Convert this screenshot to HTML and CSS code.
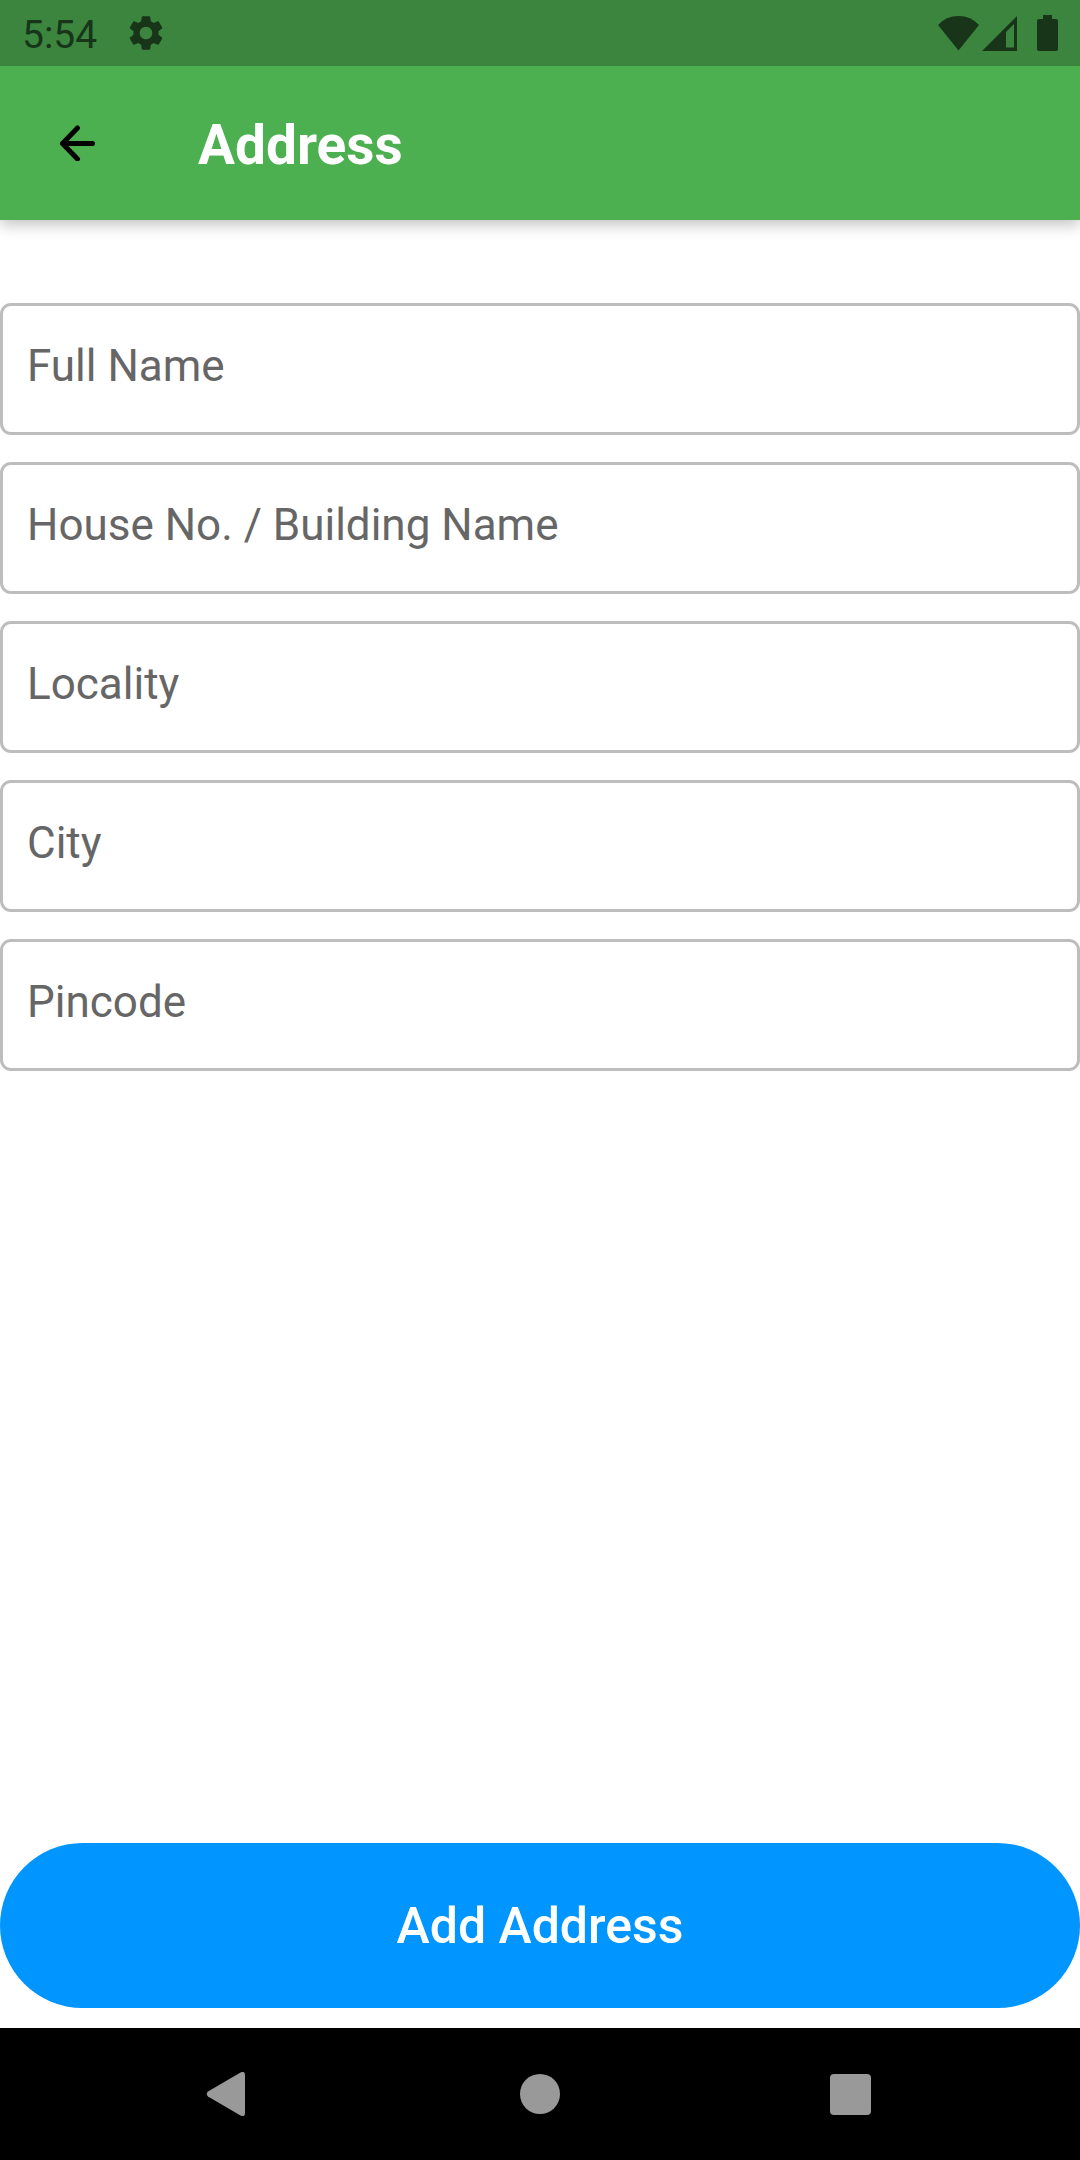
FILE: index.html
```html
<!DOCTYPE html>
<html lang="en">
<head>
<meta charset="utf-8">
<meta name="viewport" content="width=device-width, initial-scale=1">
<title>Address</title>
<link rel="stylesheet" href="styles.css">
</head>
<body>
<div class="screen">
  <div class="status-bar">
    <time class="clock">5:54</time>
    <svg class="gear" viewBox="0 0 24 24" aria-hidden="true"><path d="M19.14 12.94c.04-.3.06-.61.06-.94 0-.32-.02-.64-.07-.94l2.03-1.58c.18-.14.23-.41.12-.61l-1.92-3.32c-.12-.22-.37-.29-.59-.22l-2.39.96c-.5-.38-1.03-.7-1.62-.94l-.36-2.54c-.04-.24-.24-.41-.48-.41h-3.84c-.24 0-.43.17-.47.41l-.36 2.54c-.59.24-1.13.57-1.62.94l-2.39-.96c-.22-.08-.47 0-.59.22L2.74 8.87c-.12.21-.08.47.12.61l2.03 1.58c-.05.3-.09.63-.09.94s.02.64.07.94l-2.03 1.58c-.18.14-.23.41-.12.61l1.92 3.32c.12.22.37.29.59.22l2.39-.96c.5.38 1.03.7 1.62.94l.36 2.54c.05.24.24.41.48.41h3.84c.24 0 .44-.17.47-.41l.36-2.54c.59-.24 1.13-.56 1.62-.94l2.39.96c.22.08.47 0 .59-.22l1.92-3.32c.12-.22.07-.47-.12-.61l-2.01-1.58zM12 15.6c-1.98 0-3.6-1.62-3.6-3.6s1.62-3.6 3.6-3.6 3.6 1.62 3.6 3.6-1.62 3.6-3.6 3.6z"/></svg>
    <div class="indicators">
      <svg class="wifi" viewBox="0 0 41 36" aria-hidden="true"><path d="M0 10Q8 1 20.500 1T41 10L20.500 35.500Z"/></svg>
      <svg class="signal" viewBox="0 0 35 36" aria-hidden="true"><path fill-rule="evenodd" d="M35 1V36H0ZM24 17V32.500H32V9Z"/></svg>
      <svg class="battery" viewBox="0 0 21 36" aria-hidden="true"><path d="M6 0H15V4H19Q21 4 21 6V34Q21 36 19 36H2Q0 36 0 34V6Q0 4 2 4H6Z"/></svg>
    </div>
  </div>

  <header class="app-bar">
    <button class="back" type="button" aria-label="Back">
      <svg viewBox="0 0 36 36" aria-hidden="true"><path d="M33.500 18.500H3.500M18.500 3L3.500 18.500L18.500 34"/></svg>
    </button>
    <h1 class="title">Address</h1>
  </header>

  <form class="address-form">
    <div class="fields">
      <input class="field" type="text" placeholder="Full Name" aria-label="Full Name">
      <input class="field" type="text" placeholder="House No. / Building Name" aria-label="House No. / Building Name">
      <input class="field" type="text" placeholder="Locality" aria-label="Locality">
      <input class="field" type="text" placeholder="City" aria-label="City">
      <input class="field" type="text" placeholder="Pincode" aria-label="Pincode">
    </div>
    <button class="submit" type="submit">Add Address</button>
  </form>

  <nav class="system-nav">
    <button type="button" aria-label="Back"><svg viewBox="0 0 44 44" aria-hidden="true"><path d="M34.500 .5Q39 -1.500 39 3V41Q39 45.500 34.500 43.500L2 24.500Q-.5 22 2 19.500Z"/></svg></button>
    <button type="button" aria-label="Home"><svg viewBox="0 0 44 44" aria-hidden="true"><circle cx="22" cy="22" r="20"/></svg></button>
    <button type="button" aria-label="Recent apps"><svg viewBox="0 0 44 44" aria-hidden="true"><rect y="2" width="41" height="41" rx="4"/></svg></button>
  </nav>
</div>
</body>
</html>
```

FILE: styles.css
```css
* {
  box-sizing: border-box;
}

body {
  margin: 0;
  background: #fff;
  font-family: Roboto, "Liberation Sans", sans-serif;
}

button {
  display: flex;
  align-items: center;
  justify-content: center;
  padding: 0;
  border: 0;
  background: none;
  font-family: inherit;
}

svg {
  display: block;
}

.screen {
  display: flex;
  flex-direction: column;
  min-height: 100vh;
}

.status-bar {
  position: relative;
  z-index: 1;
  display: flex;
  align-items: center;
  height: 66px;
  padding: 0 22px;
  background: #3b853e;
  color: #18351a;
  fill: currentColor;
}

.clock {
  padding-top: 4px;
  font-size: 39px;
  line-height: 46px;
}

.gear {
  width: 42px;
  height: 42px;
  margin-left: 28px;
}

.indicators {
  display: flex;
  align-items: center;
  margin-left: auto;
}

.wifi {
  width: 41px;
  height: 36px;
}

.signal {
  width: 35px;
  height: 36px;
  margin: 0 20px 0 3px;
}

.battery {
  width: 21px;
  height: 36px;
}

.app-bar {
  display: flex;
  align-items: center;
  gap: 44px;
  height: 154px;
  padding: 0 44px 0 0;
  background: #4caf50;
  box-shadow: 0 5px 14px rgba(0, 0, 0, 0.24);
}

.back {
  width: 154px;
  height: 154px;
}

.back svg {
  width: 36px;
  height: 36px;
  fill: none;
  stroke: #000;
  stroke-width: 5;
  stroke-linecap: round;
  stroke-linejoin: round;
}

.title {
  margin: 0;
  padding-top: 4px;
  color: #fff;
  font-size: 55px;
  font-weight: 700;
  line-height: 64px;
}

.address-form {
  display: flex;
  flex: 1;
  flex-direction: column;
  justify-content: space-between;
  gap: 28px;
  padding: 83px 0 20px;
}

.fields {
  display: flex;
  flex-direction: column;
  gap: 27px;
}

.field {
  width: 100%;
  height: 132px;
  padding: 0 24px 6px;
  border: 3px solid #bdbdbd;
  border-radius: 11px;
  background: #fff;
  color: #212121;
  font-family: inherit;
  font-size: 44px;
}

.field::placeholder {
  color: #666;
  opacity: 1;
}

.submit {
  width: 100%;
  height: 165px;
  border-radius: 83px;
  background: #0095ff;
  color: #fff;
  font-size: 50px;
  font-weight: 500;
}

.system-nav {
  display: flex;
  justify-content: space-between;
  height: 132px;
  padding: 0 162px;
  background: #000;
}

.system-nav button {
  width: 132px;
}

.system-nav svg {
  width: 44px;
  height: 44px;
  fill: #999;
}
```
